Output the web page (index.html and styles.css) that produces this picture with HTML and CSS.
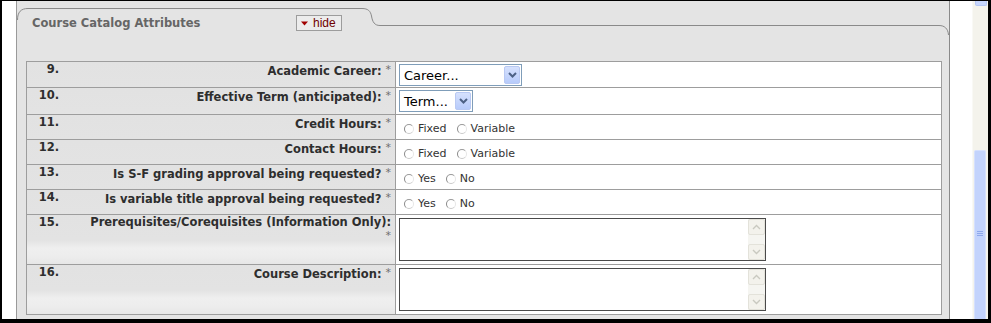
FILE: index.html
```html
<!DOCTYPE html>
<html lang="en">
<head>
    <meta charset="UTF-8">
    <title>Course Catalog Attributes</title>
    <link rel="stylesheet" href="styles.css">
</head>
<body>
    <div class="screen">
        <div class="gutter-left"></div>

        <div class="panel">
            <div class="panel-head">
                <svg class="tab-outline" width="932" height="60" viewBox="0 0 932 60">
                    <path d="M0.5,19 C0.5,11 4,7.5 11,7.5 H345 C351,7.5 353.5,10 354.5,15 C355.5,21 357.5,24.5 363,24.5 H922 C927.5,24.5 931,27.5 931.5,34"
                          fill="none" stroke="#8a8a8a" stroke-width="1"/>
                </svg>
                <div class="head-content">
                    <h2 class="panel-title">Course Catalog Attributes</h2>
                    <button class="hide-button">
                        <svg width="7" height="5" viewBox="0 0 7 5"><path d="M0,0.5 H7 L3.5,4.5 Z" fill="#a00000"/></svg>
                        <span>hide</span>
                    </button>
                </div>
            </div>

            <table class="attrs">
                <tr class="row-select first">
                    <th><div class="label-line"><span class="num">9.</span><span class="label">Academic Career: <span class="req">*</span></span></div></th>
                    <td>
                        <span class="select select-career">
                            <span class="select-value">Career...</span>
                            <span class="select-arrow"><svg width="9" height="6" viewBox="0 0 9 6"><path d="M1,1 L4.5,4.5 L8,1" fill="none" stroke="#4d6185" stroke-width="2"/></svg></span>
                        </span>
                    </td>
                </tr>
                <tr class="row-select second">
                    <th><div class="label-line"><span class="num">10.</span><span class="label">Effective Term (anticipated): <span class="req">*</span></span></div></th>
                    <td>
                        <span class="select select-term">
                            <span class="select-value">Term...</span>
                            <span class="select-arrow"><svg width="9" height="6" viewBox="0 0 9 6"><path d="M1,1 L4.5,4.5 L8,1" fill="none" stroke="#4d6185" stroke-width="2"/></svg></span>
                        </span>
                    </td>
                </tr>
                <tr class="row-radio">
                    <th><div class="label-line"><span class="num">11.</span><span class="label">Credit Hours: <span class="req">*</span></span></div></th>
                    <td>
                        <div class="choices">
                            <label class="choice"><input type="radio" name="credit">Fixed</label>
                            <label class="choice"><input type="radio" name="credit">Variable</label>
                        </div>
                    </td>
                </tr>
                <tr class="row-radio">
                    <th><div class="label-line"><span class="num">12.</span><span class="label">Contact Hours: <span class="req">*</span></span></div></th>
                    <td>
                        <div class="choices">
                            <label class="choice"><input type="radio" name="contact">Fixed</label>
                            <label class="choice"><input type="radio" name="contact">Variable</label>
                        </div>
                    </td>
                </tr>
                <tr class="row-radio">
                    <th><div class="label-line"><span class="num">13.</span><span class="label">Is S-F grading approval being requested? <span class="req">*</span></span></div></th>
                    <td>
                        <div class="choices">
                            <label class="choice"><input type="radio" name="sf">Yes</label>
                            <label class="choice"><input type="radio" name="sf">No</label>
                        </div>
                    </td>
                </tr>
                <tr class="row-radio">
                    <th><div class="label-line"><span class="num">14.</span><span class="label">Is variable title approval being requested? <span class="req">*</span></span></div></th>
                    <td>
                        <div class="choices">
                            <label class="choice"><input type="radio" name="vt">Yes</label>
                            <label class="choice"><input type="radio" name="vt">No</label>
                        </div>
                    </td>
                </tr>
                <tr class="row-text">
                    <th><div class="label-line"><span class="num">15.</span><span class="label">Prerequisites/Corequisites (Information Only): <span class="req">*</span></span></div></th>
                    <td>
                        <div class="textbox">
                            <textarea></textarea>
                            <div class="vscroll">
                                <span class="vbtn"><svg width="9" height="6" viewBox="0 0 9 6"><path d="M1,5 L4.5,1.5 L8,5" fill="none" stroke="#c9c9c0" stroke-width="1.4"/></svg></span>
                                <span class="vbtn"><svg width="9" height="6" viewBox="0 0 9 6"><path d="M1,1 L4.5,4.5 L8,1" fill="none" stroke="#c9c9c0" stroke-width="1.4"/></svg></span>
                            </div>
                        </div>
                    </td>
                </tr>
                <tr class="row-text">
                    <th><div class="label-line"><span class="num">16.</span><span class="label">Course Description: <span class="req">*</span></span></div></th>
                    <td>
                        <div class="textbox">
                            <textarea></textarea>
                            <div class="vscroll">
                                <span class="vbtn"><svg width="9" height="6" viewBox="0 0 9 6"><path d="M1,5 L4.5,1.5 L8,5" fill="none" stroke="#c9c9c0" stroke-width="1.4"/></svg></span>
                                <span class="vbtn"><svg width="9" height="6" viewBox="0 0 9 6"><path d="M1,1 L4.5,4.5 L8,1" fill="none" stroke="#c9c9c0" stroke-width="1.4"/></svg></span>
                            </div>
                        </div>
                    </td>
                </tr>
            </table>
        </div>

        <div class="gutter-right"></div>

        <div class="page-scroll">
            <div class="page-scroll-btn"></div>
            <div class="page-scroll-track"></div>
            <div class="page-scroll-thumb">
                <span class="grip"></span>
            </div>
        </div>
    </div>
</body>
</html>
```

FILE: styles.css
```css
* {
    box-sizing: border-box;
}

body {
    margin: 0;
    font-family: "DejaVu Sans", Verdana, sans-serif;
    color: #333;
}

.screen {
    width: 991px;
    height: 323px;
    display: flex;
    background-color: #fff;
    border-style: solid;
    border-color: #000;
    border-width: 1px 3px 4px 2px;
    overflow: hidden;
}

.gutter-left {
    width: 14px;
    flex: none;
}

.gutter-right {
    width: 22px;
    flex: none;
}

/* grey tabbed panel */
.panel {
    width: 934px;
    flex: none;
    background-color: #e4e4e4;
    border-left: 1px solid #9a9a9a;
    border-right: 1px solid #8a8a8a;
}

.panel-head {
    display: grid;
    height: 60px;
}

.tab-outline,
.head-content {
    grid-area: 1 / 1;
}

.tab-outline {
    display: block;
}

.head-content {
    display: flex;
    align-items: flex-start;
    padding: 13px 0 0 15px;
}

.panel-title {
    width: 264px;
    margin: 0;
    padding-top: 1px;
    font-size: 11.5px;
    line-height: 16px;
    font-weight: bold;
    color: #666;
}

.hide-button {
    display: flex;
    align-items: center;
    gap: 5px;
    width: 46px;
    height: 16px;
    margin: 1px 0 0;
    padding: 0 0 0 4px;
    border: 1px solid #9c9c9c;
    background-color: #ececec;
    font-family: "Liberation Sans", Arial, sans-serif;
    font-size: 12px;
    color: #700000;
    cursor: pointer;
}

.hide-button svg {
    display: block;
}

/* attribute table */
.attrs {
    width: 916px;
    margin-left: 9px;
    border-collapse: collapse;
}

.attrs th,
.attrs td {
    border: 1px solid #9d9d9d;
    padding: 0;
    vertical-align: top;
}

.attrs th {
    width: 369px;
    text-align: right;
    font-size: 11.5px;
    line-height: 13px;
    font-weight: bold;
    color: #2e2e2e;
    background: #e4e4e4 linear-gradient(to bottom, #e2e2e2 0, #e3e3e3 25px, #efefef 33px, #ededed 41px, #e6e6e6 50px) no-repeat;
    background-size: 100% 50px;
}

.attrs td {
    background-color: #fff;
    padding-left: 3px;
    font-size: 11px;
    line-height: 13px;
}

.label-line {
    display: flex;
    padding-top: 1px;
}

.num {
    flex: none;
    width: 57px;
    padding-right: 25px;
}

.label {
    flex: 1;
    padding-right: 4px;
}

.req {
    font-weight: normal;
    font-size: 11px;
    color: #6f6f6f;
    vertical-align: 2px;
}

.row-select.first {
    height: 26px;
}

.row-select.second {
    height: 27px;
}

.row-select td {
    padding-top: 2px;
}

.row-radio {
    height: 25px;
}

.row-radio td {
    padding-top: 7px;
}

.row-text {
    height: 50px;
}

.row-text td {
    padding-top: 3px;
}

/* fake xp style drop down */
.select {
    display: flex;
    align-items: center;
    height: 22px;
    border: 1px solid #7f9db9;
    background-color: #fff;
    padding-right: 1px;
}

.select-career {
    width: 123px;
}

.select-term {
    width: 74px;
}

.select-value {
    flex: 1;
    padding-left: 4px;
    font-size: 13px;
    color: #000;
}

.select-arrow {
    display: flex;
    align-items: center;
    justify-content: center;
    width: 16px;
    height: 18px;
    border: 1px solid #b9c9f3;
    border-radius: 2px;
    background: linear-gradient(to bottom, #d6e1fd, #b7cbfb);
}

/* radio buttons */
.choices {
    display: flex;
    height: 13px;
}

.choice {
    display: flex;
    align-items: center;
    margin-right: 5px;
    color: #333;
}

.choice input {
    appearance: none;
    width: 10px;
    height: 10px;
    margin: 0 4px 0 5px;
    border: 1px solid;
    border-color: #9a9a9a #e6e6e6 #c9c9c9 #888;
    border-radius: 50%;
    background-color: #fff;
}

/* text areas with a scroll bar */
.textbox {
    display: flex;
    width: 367px;
    height: 43px;
    border: 1px solid #4a4a4a;
    background-color: #fff;
}

.textbox textarea {
    flex: 1;
    border: none;
    resize: none;
    outline: none;
    padding: 2px;
    font-family: inherit;
    overflow: hidden;
}

.vscroll {
    width: 17px;
    display: flex;
    flex-direction: column;
    justify-content: space-between;
    background-color: #f5f5f1;
}

.vbtn {
    display: flex;
    align-items: center;
    justify-content: center;
    height: 16px;
    border: 1px solid #e3e2da;
    border-radius: 2px;
    background-color: #f3f2ec;
}

/* window scroll bar */
.page-scroll {
    width: 16px;
    flex: none;
    display: flex;
    flex-direction: column;
    background-color: #f4f3ec;
    border-left: 1px solid #f9f9f5;
}

.page-scroll-btn {
    height: 5px;
    margin: 0 1px 0 2px;
    border: 1px solid #b4c6f5;
    border-top: none;
    border-radius: 0 0 2px 2px;
    background-color: #c6d5fc;
}

.page-scroll-track {
    height: 144px;
}

.page-scroll-thumb {
    flex: 1;
    display: flex;
    justify-content: center;
    margin: 0 2px 0 1px;
    padding-top: 80px;
    border: 1px solid #d5e0fd;
    border-bottom: none;
    border-radius: 2px 2px 0 0;
    background-color: #c3d3fc;
}

.grip {
    width: 6px;
    height: 5px;
    border-top: 1px solid #8ea8ec;
    border-bottom: 1px solid #8ea8ec;
    background: linear-gradient(to bottom, transparent 1px, #8ea8ec 1px, #8ea8ec 2px, transparent 2px);
}
```
